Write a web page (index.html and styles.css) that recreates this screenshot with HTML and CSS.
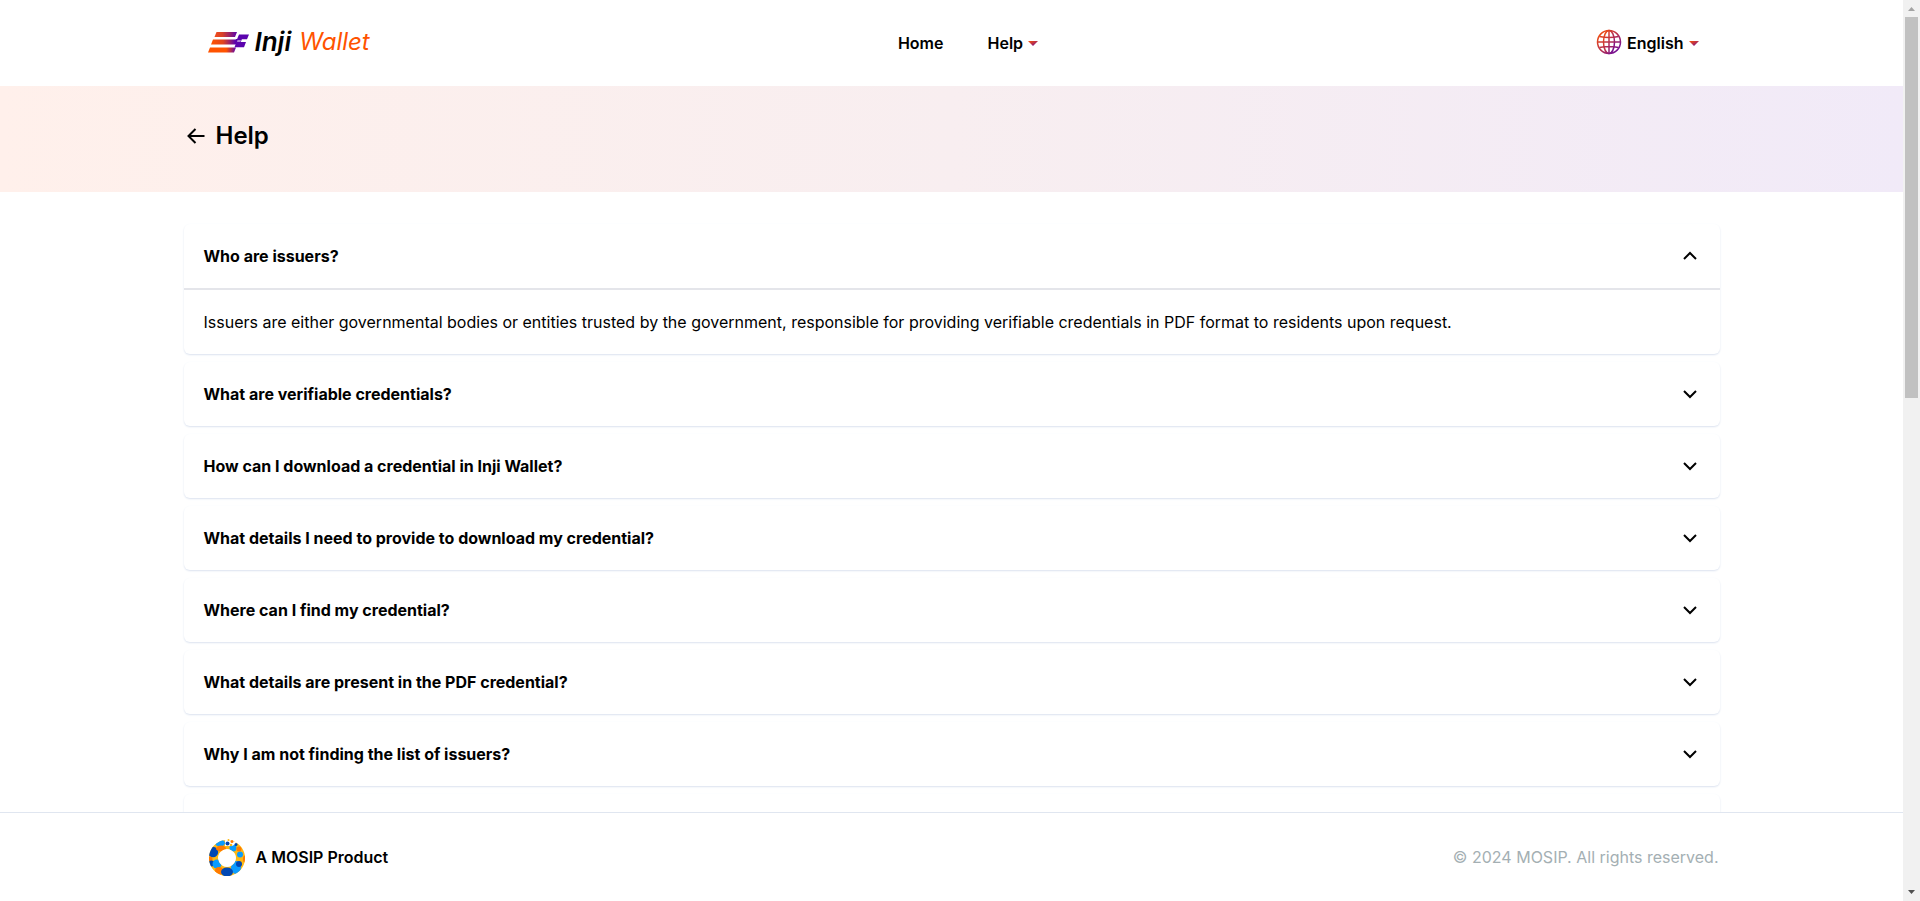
FILE: index.html
```html
<!DOCTYPE html>
<html lang="en">
<head>
<meta charset="utf-8">
<title>Inji Wallet - Help</title>
<link rel="stylesheet" href="styles.css">
</head>
<body>
<div class="window">
  <div class="app">
    <header class="header">
      <div class="container header-row">
        <a class="brand" href="#" aria-label="Inji Wallet">
          <svg class="brand-mark" width="42" height="21" viewBox="0 0 42 21" aria-hidden="true">
            <defs>
              <linearGradient id="bar1"><stop offset="0" stop-color="#f04c1c"/><stop offset=".35" stop-color="#d84128"/><stop offset="1" stop-color="#5b03ad"/></linearGradient>
              <linearGradient id="bar2"><stop offset="0" stop-color="#ff5300"/><stop offset=".45" stop-color="#e0441e"/><stop offset=".9" stop-color="#5b03ad"/></linearGradient>
              <linearGradient id="bar3"><stop offset="0" stop-color="#ff5300"/><stop offset=".65" stop-color="#ff5300"/><stop offset="1" stop-color="#5b03ad"/></linearGradient>
            </defs>
            <path d="M8.500 0H29L27 5H6.500z" fill="url(#bar1)"/>
            <path d="M5 7.500H30L28 12.500H3z" fill="url(#bar2)"/>
            <path d="M2 15.500H28L26 20.500H0z" fill="url(#bar3)"/>
            <path d="M31 2.500H41L39 7.300H29zM28.500 10H38L36 15.200H26.500zM28 7H34L32.500 10.500H27z" fill="#5b03ad"/>
            <path d="M29.500 8.500H33L32.300 9.500H29z" fill="#fff"/>
          </svg>
          <span class="brand-inji">Inji</span>
          <span class="brand-wallet">Wallet</span>
        </a>
        <nav class="nav">
          <a class="nav-item" href="#">Home</a>
          <button class="nav-item" type="button">Help
            <svg width="10" height="5" viewBox="0 0 10 5" aria-hidden="true"><path d="M0 0H10L5 5z" fill="url(#warm)"/></svg>
          </button>
        </nav>
        <button class="language" type="button">
          <svg class="globe" width="26" height="26" viewBox="0 0 26 26" aria-hidden="true">
            <defs><linearGradient id="warm" x1="0" y1="0" x2="1" y2="1"><stop offset="0" stop-color="#ff5300"/><stop offset=".5" stop-color="#b82f4c"/><stop offset="1" stop-color="#5b03ad"/></linearGradient></defs>
            <g fill="none" stroke="url(#warm)" stroke-width="1.500"><circle cx="13" cy="13" r="11.500"/><ellipse cx="13" cy="13" rx="5.500" ry="11.500"/><path d="M13 1.500V24.500L13.010 1.500M1.500 13H24.500L1.500 13.010M3.500 7.500Q13 9.500 22.500 7.500M3.500 18.500Q13 16.500 22.500 18.500"/></g>
          </svg>
          <span>English</span>
          <svg width="10" height="5" viewBox="0 0 10 5" aria-hidden="true"><path d="M0 0H10L5 5z" fill="url(#warm)"/></svg>
        </button>
      </div>
    </header>

    <section class="banner">
      <div class="container banner-row">
        <button class="back" type="button" aria-label="Back">
          <svg width="18" height="16" viewBox="0 0 18 16" aria-hidden="true"><path d="M8.500 1L1.500 8L8.500 15M1.500 8H17.500" fill="none" stroke="#000" stroke-width="2"/></svg>
        </button>
        <h1 class="title">Help</h1>
      </div>
    </section>

    <main class="main">
      <div class="container faq">
        <section class="card">
          <button class="question" type="button" aria-expanded="true" aria-controls="a1"><span>Who are issuers?</span><svg width="14" height="10" viewBox="0 0 14 10" aria-hidden="true"><path d="M1 8L7 2L13 8"/></svg></button>
          <p class="answer" id="a1">Issuers are either governmental bodies or entities trusted by the government, responsible for providing verifiable credentials in PDF format to residents upon request.</p>
        </section>
        <section class="card"><button class="question" type="button" aria-expanded="false"><span>What are verifiable credentials?</span><svg width="14" height="10" viewBox="0 0 14 10" aria-hidden="true"><path d="M1 2L7 8L13 2"/></svg></button></section>
        <section class="card"><button class="question" type="button" aria-expanded="false"><span>How can I download a credential in Inji Wallet?</span><svg width="14" height="10" viewBox="0 0 14 10" aria-hidden="true"><path d="M1 2L7 8L13 2"/></svg></button></section>
        <section class="card"><button class="question" type="button" aria-expanded="false"><span>What details I need to provide to download my credential?</span><svg width="14" height="10" viewBox="0 0 14 10" aria-hidden="true"><path d="M1 2L7 8L13 2"/></svg></button></section>
        <section class="card"><button class="question" type="button" aria-expanded="false"><span>Where can I find my credential?</span><svg width="14" height="10" viewBox="0 0 14 10" aria-hidden="true"><path d="M1 2L7 8L13 2"/></svg></button></section>
        <section class="card"><button class="question" type="button" aria-expanded="false"><span>What details are present in the PDF credential?</span><svg width="14" height="10" viewBox="0 0 14 10" aria-hidden="true"><path d="M1 2L7 8L13 2"/></svg></button></section>
        <section class="card"><button class="question" type="button" aria-expanded="false"><span>Why I am not finding the list of issuers?</span><svg width="14" height="10" viewBox="0 0 14 10" aria-hidden="true"><path d="M1 2L7 8L13 2"/></svg></button></section>
        <section class="card card-next"></section>
      </div>
    </main>

    <footer class="footer">
      <div class="container footer-row">
        <div class="product">
          <svg width="36" height="38" viewBox="0 -1 36 38" aria-hidden="true">
            <defs><clipPath id="ring"><path clip-rule="evenodd" d="M18 1A18 18 0 1 1 17.990 1zM18 10A9 9 0 1 0 18.010 10z"/></clipPath></defs>
            <g clip-path="url(#ring)">
              <path d="M0 0H36V37H0z" fill="#fdb913"/>
              <circle cx="4" cy="13" r="5.200" fill="#0047b3"/>
              <ellipse cx="11" cy="4" rx="5" ry="3.500" fill="#0a9cff"/>
              <ellipse cx="12" cy="9.500" rx="5" ry="3" fill="#ff7a00"/>
              <circle cx="1" cy="20" r="2.500" fill="#ff7a00"/>
              <circle cx="2.500" cy="24.500" r="3" fill="#0047b3"/>
              <circle cx="8" cy="25" r="4.500" fill="#0a9cff"/>
              <circle cx="10" cy="32" r="4" fill="#ff7a00"/>
              <ellipse cx="27" cy="28.500" rx="5" ry="6.500" fill="#0a9cff"/>
              <circle cx="30" cy="25" r="3" fill="#0047b3"/>
              <ellipse cx="18" cy="33" rx="6" ry="4.500" fill="#0047b3"/>
              <circle cx="31" cy="15.500" r="3" fill="#0a9cff"/>
              <ellipse cx="36" cy="20" rx="2" ry="3.500" fill="#ff7a00"/>
              <circle cx="24" cy="9" r="3.500" fill="#0a9cff"/>
              <circle cx="30" cy="10" r="2.500" fill="#ff7a00"/>
              <path d="M16 0H30L27 5L23 7H16z" fill="#fff"/>
            </g>
            <circle cx="18.500" cy="4.500" r="2" fill="#0047b3"/>
            <circle cx="23" cy="2.500" r="1.500" fill="#ff7a00"/>
            <circle cx="19.500" cy="1" r="1" fill="#fdb913"/>
            <circle cx="22" cy="6" r="1.300" fill="#fdb913"/>
            <circle cx="27" cy="5.500" r="1.500" fill="#0047b3"/>
          </svg>
          <span>A MOSIP Product</span>
        </div>
        <span class="copyright">© 2024 MOSIP. All rights reserved.</span>
      </div>
    </footer>
  </div>
  <div class="scrollbar" aria-hidden="true">
    <svg width="17" height="17" viewBox="0 0 17 17"><path d="M5 11H12L8.500 7z" fill="#a3a3a3"/></svg>
    <div class="track"><div class="thumb"></div></div>
    <svg width="17" height="17" viewBox="0 0 17 17"><path d="M5 6H12L8.500 10z" fill="#505050"/></svg>
  </div>
</div>
</body>
</html>
```
FILE: styles.css
```css
* { box-sizing: border-box; }
body { margin: 0; font-family: Inter, "Liberation Sans", sans-serif; font-size: 16px; line-height: 24px; color: #000; background: #fff; }
a { color: inherit; text-decoration: none; }
button { font: inherit; color: inherit; background: none; border: 0; padding: 0; cursor: pointer; }
svg { display: block; flex: none; }
.window { display: flex; height: 100vh; overflow: hidden; }
.app { flex: 1; min-width: 0; display: flex; flex-direction: column; }
.container { width: 100%; max-width: 1536px; margin: 0 auto; }

.header { flex: none; padding: 24px 0; }
.header-row { display: grid; grid-template-columns: 1fr auto 1fr; align-items: center; height: 38px; padding: 0 21px 0 24px; }
.brand { display: flex; align-items: center; padding-bottom: 2px; font-style: italic; font-size: 24px; }
.brand-inji { margin-left: 5px; font-size: 26px; font-weight: 600; }
.brand-wallet { margin-left: 8px; color: #ff5300; }
.nav { display: flex; gap: 44px; padding-left: 30px; }
.nav-item { display: flex; align-items: center; gap: 5px; font-weight: 600; }
.language { display: flex; align-items: center; justify-self: end; gap: 5px; font-weight: 600; }
.globe { margin-bottom: 2px; }

.banner { flex: none; padding: 33px 0 39px; background: linear-gradient(90deg, #fff0eb, #f8eef0 50%, #f1eaf8); }
.banner-row { display: flex; align-items: center; gap: 11px; height: 34px; padding-left: 3px; }
.title { margin: 0; font-size: 24px; line-height: 32px; font-weight: 600; }

.main { flex: 1; min-height: 0; overflow: hidden; padding-top: 32px; }
.faq { display: flex; flex-direction: column; gap: 8px; }
.card { flex: none; border-radius: 6px; box-shadow: 0 1px 2px #dbe2ef; }
.question { display: flex; align-items: center; justify-content: space-between; width: 100%; padding: 20px 23px 20px 20px; font-weight: 700; text-align: left; }
.question path { fill: none; stroke: #000; stroke-width: 2; }
.answer { margin: 0; padding: 20px; border-top: 2px solid #e4e5ea; }
.card-next { height: 64px; }

.footer { flex: none; border-top: 1px solid #e0e6f0; padding: 25px 0; background: #fff; }
.footer-row { display: flex; align-items: center; justify-content: space-between; padding: 0 1px 0 25px; }
.product { display: flex; align-items: center; gap: 11px; font-weight: 600; }
.copyright { color: #a4afb3; }

.scrollbar { flex: none; width: 17px; display: flex; flex-direction: column; background: #f1f1f1; }
.track { flex: 1; padding: 0 2px; }
.thumb { height: 44%; background: #c1c1c1; }
```
